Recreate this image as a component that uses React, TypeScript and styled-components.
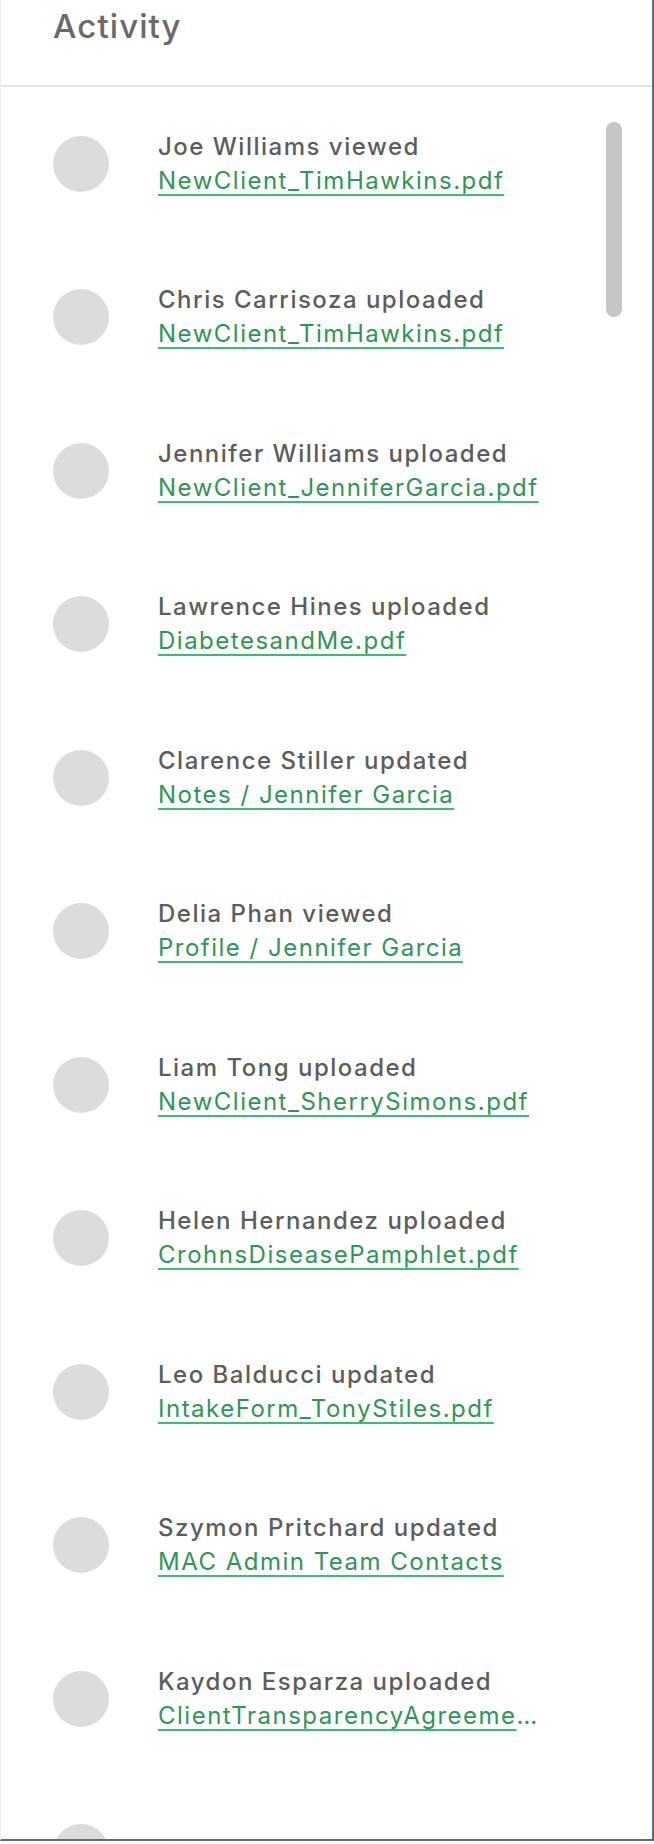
import styled, { createGlobalStyle } from "styled-components";

type ActivityItem = {
  id: number;
  actor: string;
  action: string;
  target: string;
};

const activity: ActivityItem[] = [
  { id: 1, actor: "Joe Williams", action: "viewed", target: "NewClient_TimHawkins.pdf" },
  { id: 2, actor: "Chris Carrisoza", action: "uploaded", target: "NewClient_TimHawkins.pdf" },
  { id: 3, actor: "Jennifer Williams", action: "uploaded", target: "NewClient_JenniferGarcia.pdf" },
  { id: 4, actor: "Lawrence Hines", action: "uploaded", target: "DiabetesandMe.pdf" },
  { id: 5, actor: "Clarence Stiller", action: "updated", target: "Notes / Jennifer Garcia" },
  { id: 6, actor: "Delia Phan", action: "viewed", target: "Profile / Jennifer Garcia" },
  { id: 7, actor: "Liam Tong", action: "uploaded", target: "NewClient_SherrySimons.pdf" },
  { id: 8, actor: "Helen Hernandez", action: "uploaded", target: "CrohnsDiseasePamphlet.pdf" },
  { id: 9, actor: "Leo Balducci", action: "updated", target: "IntakeForm_TonyStiles.pdf" },
  { id: 10, actor: "Szymon Pritchard", action: "updated", target: "MAC Admin Team Contacts" },
  { id: 11, actor: "Kaydon Esparza", action: "uploaded", target: "ClientTransparencyAgreement.pdf" },
];

const App = () => {
  return (
    <>
      <GlobalStyle />
      <Panel>
        <Header>
          <Title>Activity</Title>
        </Header>
        <Feed>
          {activity.map((item) => (
            <Row key={item.id}>
              <Avatar />
              <Details>
                <Summary>
                  {item.actor} {item.action}
                </Summary>
                <FileLink href="#">{item.target}</FileLink>
              </Details>
            </Row>
          ))}
          {/* next page still loading */}
          <Row>
            <Avatar />
          </Row>
          <ScrollThumb />
        </Feed>
      </Panel>
    </>
  );
};

export default App;

const GlobalStyle = createGlobalStyle`
  html, body {
    margin: 0;
    padding: 0;
    background: #ffffff;
  }

  body {
    font-family: Inter, "Liberation Sans", sans-serif;
  }
`;

const Panel = styled.div`
  width: 654px;
  height: 1841px;
  box-sizing: border-box;
  border-left: 1px solid #ececec;
  border-right: 2px solid #5b6f75;
  border-bottom: 2px solid #5b6f75;
  background: #ffffff;
  overflow: hidden;
  display: flex;
  flex-direction: column;
`;

const Header = styled.header`
  height: 87px;
  flex-shrink: 0;
  padding: 10px 0 0 52px;
  box-sizing: border-box;
  border-bottom: 2px solid #e4e4e4;
`;

const Title = styled.h2`
  margin: 0;
  font-size: 33px;
  line-height: 33px;
  font-weight: 500;
  letter-spacing: 1.1px;
  color: #6a6a6a;
`;

const Feed = styled.div`
  position: relative;
  display: flex;
  flex-direction: column;
`;

const Row = styled.div`
  height: 153.5px;
  flex-shrink: 0;
  display: flex;
  align-items: center;
  gap: 49px;
  padding-left: 52px;
`;

const Avatar = styled.div`
  width: 56px;
  height: 56px;
  flex-shrink: 0;
  border-radius: 50%;
  background: #dcdcdc;
`;

const Details = styled.div`
  display: flex;
  flex-direction: column;
  min-width: 0;
`;

const Summary = styled.span`
  font-size: 24px;
  line-height: 34px;
  font-weight: 500;
  letter-spacing: 1.5px;
  color: #5c5c5c;
`;

const FileLink = styled.a`
  max-width: 384px;
  font-size: 24px;
  line-height: 34px;
  letter-spacing: 1.5px;
  color: #2d9658;
  text-decoration: underline;
  text-decoration-color: #3dbb74;
  text-decoration-thickness: 2px;
  text-underline-offset: 5px;
  white-space: nowrap;
  overflow: hidden;
  text-overflow: ellipsis;
  padding-bottom: 8px;
  margin-bottom: -8px;
`;

const ScrollThumb = styled.div`
  position: absolute;
  top: 35px;
  right: 30px;
  width: 16px;
  height: 195px;
  border-radius: 8px;
  background: #c6c6c6;
`;
